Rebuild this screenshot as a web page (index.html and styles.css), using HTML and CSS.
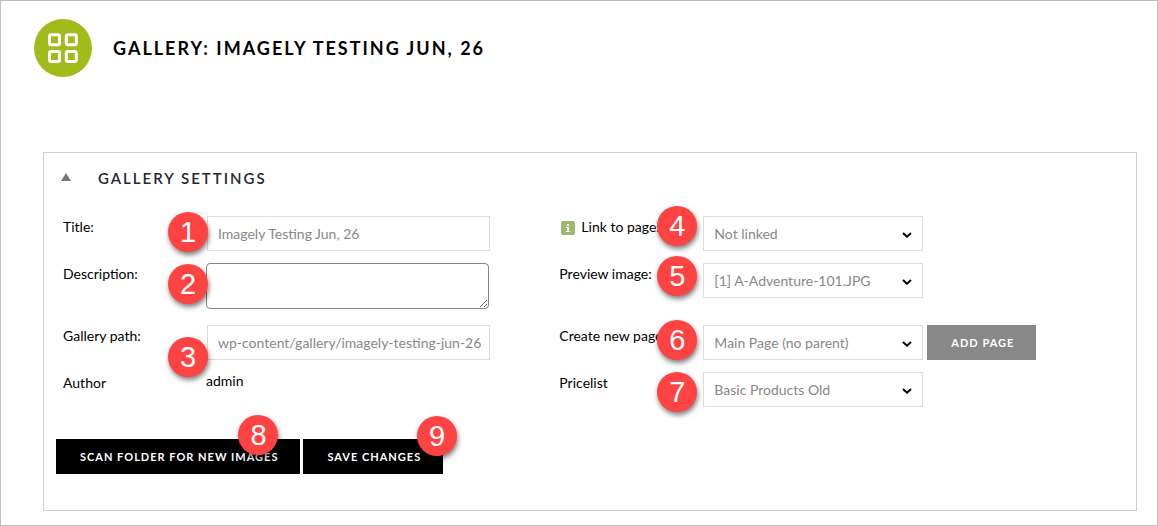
FILE: index.html
```html
<!doctype html>
<html lang="en">
<head>
    <meta charset="UTF-8">
    <meta name="viewport" content="width=device-width, initial-scale=1.0">
    <title>Gallery: Imagely Testing Jun, 26</title>
    <link rel="stylesheet" href="styles.css">
</head>
<body>
    <div class="page">
        <header class="page-header">
            <svg class="logo" viewBox="0 0 58 58" aria-hidden="true">
                <circle cx="29" cy="29" r="29" fill="#a0bb1a"/>
                <g fill="none" stroke="#fff" stroke-width="3">
                    <rect x="15.5" y="15.8" width="10" height="10" rx="1.5"/>
                    <rect x="32.3" y="15.8" width="10" height="10" rx="1.5"/>
                    <rect x="15.5" y="32.6" width="10" height="10" rx="1.5"/>
                    <rect x="32.3" y="32.6" width="10" height="10" rx="1.5"/>
                </g>
            </svg>
            <h1>Gallery: Imagely Testing Jun, 26</h1>
        </header>

        <form class="panel">
            <div class="panel-title">
                <svg class="toggle" viewBox="0 0 10 8" aria-hidden="true"><path d="M5 0L10 8H0Z" fill="#72777c"/></svg>
                <h2>Gallery Settings</h2>
            </div>

            <div class="settings">
                <label for="title">Title:</label>
                <div class="field">
                    <input class="text" type="text" id="title" value="Imagely Testing Jun, 26">
                    <span class="step step-1">1</span>
                </div>
                <label for="link"><svg class="info" viewBox="0 0 14 14" aria-hidden="true"><rect width="14" height="14" rx="2" fill="#9fb86c"/><path d="M6 3h2v2H6zM5 6h3v4h1v1H5v-1h1V7H5z" fill="#fff"/></svg>Link to page:</label>
                <div class="field">
                    <div class="select">
                        <select id="link"><option>Not linked</option></select>
                        <svg class="arrow" viewBox="0 0 10 6" aria-hidden="true"><path d="M1 1L5 4.7L9 1"/></svg>
                    </div>
                    <span class="step step-4">4</span>
                </div>

                <label for="description">Description:</label>
                <div class="field field-tall">
                    <textarea id="description"></textarea>
                    <span class="step step-2">2</span>
                </div>
                <label for="preview">Preview image:</label>
                <div class="field">
                    <div class="select">
                        <select id="preview"><option>[1] A-Adventure-101.JPG</option></select>
                        <svg class="arrow" viewBox="0 0 10 6" aria-hidden="true"><path d="M1 1L5 4.7L9 1"/></svg>
                    </div>
                    <span class="step step-5">5</span>
                </div>

                <label for="path">Gallery path:</label>
                <div class="field">
                    <input class="text" type="text" id="path" value="wp-content/gallery/imagely-testing-jun-26/">
                    <span class="step step-3">3</span>
                </div>
                <label for="parent">Create new page:</label>
                <div class="field">
                    <div class="select">
                        <select id="parent"><option>Main Page (no parent)</option></select>
                        <svg class="arrow" viewBox="0 0 10 6" aria-hidden="true"><path d="M1 1L5 4.7L9 1"/></svg>
                    </div>
                    <button type="button" class="btn btn-grey">Add page</button>
                    <span class="step step-6">6</span>
                </div>

                <span class="label">Author</span>
                <div class="field">admin</div>
                <label for="pricelist">Pricelist</label>
                <div class="field">
                    <div class="select">
                        <select id="pricelist"><option>Basic Products Old</option></select>
                        <svg class="arrow" viewBox="0 0 10 6" aria-hidden="true"><path d="M1 1L5 4.7L9 1"/></svg>
                    </div>
                    <span class="step step-7">7</span>
                </div>
            </div>

            <div class="actions">
                <div class="action">
                    <button type="button" class="btn">Scan folder for new images</button>
                    <span class="step step-8">8</span>
                </div>
                <div class="action">
                    <button type="button" class="btn">Save changes</button>
                    <span class="step step-9">9</span>
                </div>
            </div>
        </form>
    </div>
</body>
</html>
```
FILE: styles.css
```css
* {
    box-sizing: border-box;
}

body {
    margin: 0;
    background: #fff;
    color: #000;
    font-family: Lato, sans-serif;
    font-size: 14px;
    line-height: 18px;
}

.page {
    min-height: 100vh;
    padding: 18px 20px 14px 42px;
    border: 1px solid #bfbfbf;
}

.page-header {
    display: flex;
    align-items: center;
    gap: 21px;
    margin: 0 0 75px -9px;
}

.logo {
    width: 58px;
    height: 58px;
}

h1, h2 {
    margin: 0;
    text-transform: uppercase;
}

h1 {
    font-size: 18px;
    font-weight: 700;
    letter-spacing: 2px;
}

/* Settings panel */
.panel {
    padding: 16px 12px 36px;
    border: 1px solid #ccd0d4;
}

.panel-title {
    display: flex;
    align-items: center;
    gap: 27px;
    padding-left: 5px;
    margin-bottom: 29px;
}

.toggle {
    width: 10px;
    height: 8px;
    margin-bottom: 2px;
}

h2 {
    color: #23282d;
    font-size: 15px;
    font-weight: 600;
    letter-spacing: 2px;
}

.settings {
    display: grid;
    grid-template-columns: 143px 21fr 144px 25fr;
    row-gap: 12px;
    padding-left: 7px;
}

.settings label,
.label {
    padding-top: 2px;
}

.info {
    width: 14px;
    height: 14px;
    margin: 0 6px 0 2px;
    vertical-align: -3px;
}

.field {
    display: flex;
    align-items: flex-start;
    gap: 4px;
    position: relative;
}

.field-tall {
    padding-bottom: 4px;
}

.text,
select {
    height: 35px;
    border: 1px solid #ddd;
    border-radius: 0;
    background: #fff;
    color: #888;
    font: inherit;
}

.text {
    width: 283px;
    margin-left: 1px;
    padding: 0 8px 0 10px;
}

textarea {
    width: 283px;
    height: 46px;
    padding: 2px 6px;
    border: 1px solid #7e8993;
    border-radius: 4px;
    font: inherit;
}

.select {
    position: relative;
    width: 220px;
}

select {
    width: 100%;
    padding: 0 24px 0 10px;
    appearance: none;
}

.arrow {
    position: absolute;
    top: 16px;
    right: 11px;
    width: 10px;
    height: 6px;
    fill: none;
    stroke: #000;
    stroke-width: 2;
    pointer-events: none;
}

/* Buttons */
.btn {
    height: 35px;
    padding: 0 22px 0 24px;
    border: 0;
    background: #000;
    color: #fff;
    font-family: inherit;
    font-size: 11px;
    font-weight: 700;
    letter-spacing: 1px;
    text-transform: uppercase;
    cursor: pointer;
}

.btn-grey {
    background: #888;
}

.actions {
    display: flex;
    gap: 3px;
    margin-top: 32px;
}

.action {
    position: relative;
}

/* Numbered steps */
.step {
    position: absolute;
    width: 40px;
    height: 40px;
    border-radius: 50%;
    background: #ff4343;
    box-shadow: 1px 3px 5px rgba(0, 0, 0, 0.5);
    color: #fff;
    font: 29px/41px "Liberation Sans", Arial, sans-serif;
    text-align: center;
}

.step-1 { top: -4px; left: -38px; }
.step-2 { top: 1px; left: -38px; }
.step-3 { top: 12px; left: -38px; }
.step-4 { top: -10px; left: -46px; }
.step-5 { top: -7px; left: -46px; }
.step-6 { top: -5px; left: -46px; }
.step-7 { top: 0; left: -46px; }
.step-8 { top: -24px; right: 22px; }
.step-9 { top: -23px; right: -14px; }
```
